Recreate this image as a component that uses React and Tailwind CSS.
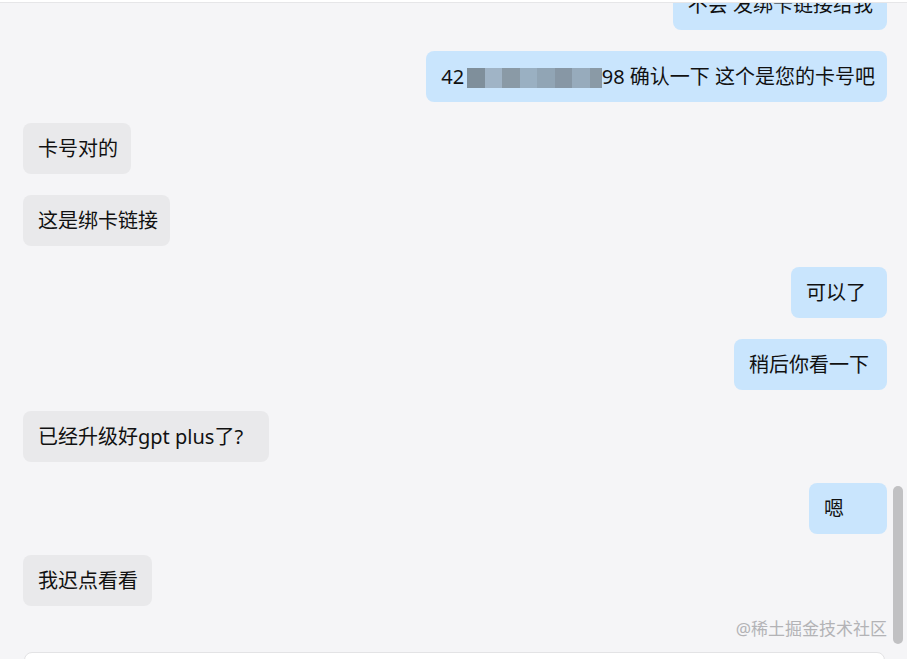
import React from 'react'

const messages = [
  { me: true, text: '不会 发绑卡链接给我', pr: 'pr-[14px]' },
  { me: true, card: true, pr: 'pr-[12px]' },
  { me: false, text: '卡号对的', pr: 'pr-[13px]' },
  { me: false, text: '这是绑卡链接', pr: 'pr-[12px]' },
  { me: true, text: '可以了', pr: 'pr-[21px]' },
  { me: true, text: '稍后你看一下', pr: 'pr-[18px]' },
  { me: false, text: '已经升级好gpt plus了?', pr: 'pr-[26px]' },
  { me: true, text: '嗯', pr: 'pr-[43px]' },
  { me: false, text: '我迟点看看', pr: 'pr-[14px]' },
]

const blocks = ['bg-[#7f8f9b]', 'bg-[#a0b4c6]', 'bg-[#8a9aa6]', 'bg-[#9ab0c2]', 'bg-[#91a5b5]', 'bg-[#8797a5]', 'bg-[#97abbc]', 'bg-[#8a9aa6]']

function CardNumber() {
  return (
    <span>
      42
      <span className="inline-flex align-[-4px] ml-[3px]">
        {blocks.map((c, i) => (
          <span key={i} className={`inline-block h-[20px] ${i === 7 ? 'w-[12px]' : 'w-[17.5px]'} ${c}`}></span>
        ))}
      </span>
      98 确认一下 这个是您的卡号吧
    </span>
  )
}

export default function App() {
  return (
    <div
      className="relative flex h-[659px] w-[907px] flex-col overflow-hidden bg-[#f5f5f7] text-[#111]"
      style={{ fontFamily: '"Noto Sans", "Noto Sans CJK SC", sans-serif' }}
    >
      <div className="h-[652px] shrink-0 overflow-hidden">
        <div className="flex flex-col gap-[21px] pl-[23px] pr-[20px] mt-[-21px]">
          {messages.map((m, i) => (
            <div key={i} className={`flex ${m.me ? 'justify-end' : 'justify-start'}`}>
              <div
                className={`rounded-lg pl-[15px] ${m.pr} py-[12px] text-[20px] leading-[27px] whitespace-nowrap ${
                  m.me ? 'bg-[#c9e5fd]' : 'bg-[#e9e9eb]'
                }`}
              >
                {m.card ? <CardNumber /> : m.text}
              </div>
            </div>
          ))}
        </div>
      </div>

      {/* input box */}
      <div className="ml-[24px] mr-[22px] h-[40px] shrink-0 rounded-lg border border-[#e3e3e5] bg-white"></div>

      {/* top edge */}
      <div className="absolute left-0 right-0 top-0 h-[3px] bg-white border-b border-[#e6e6e8]"></div>

      {/* scrollbar */}
      <div className="absolute right-[4px] top-[486px] h-[158px] w-[10px] rounded-full bg-[#c1c1c3]"></div>

      {/* watermark */}
      <div className="absolute right-[20px] top-[617px] text-[17px] leading-[24px] text-[#b3b3b6]">
        @稀土掘金技术社区
      </div>
    </div>
  )
}
